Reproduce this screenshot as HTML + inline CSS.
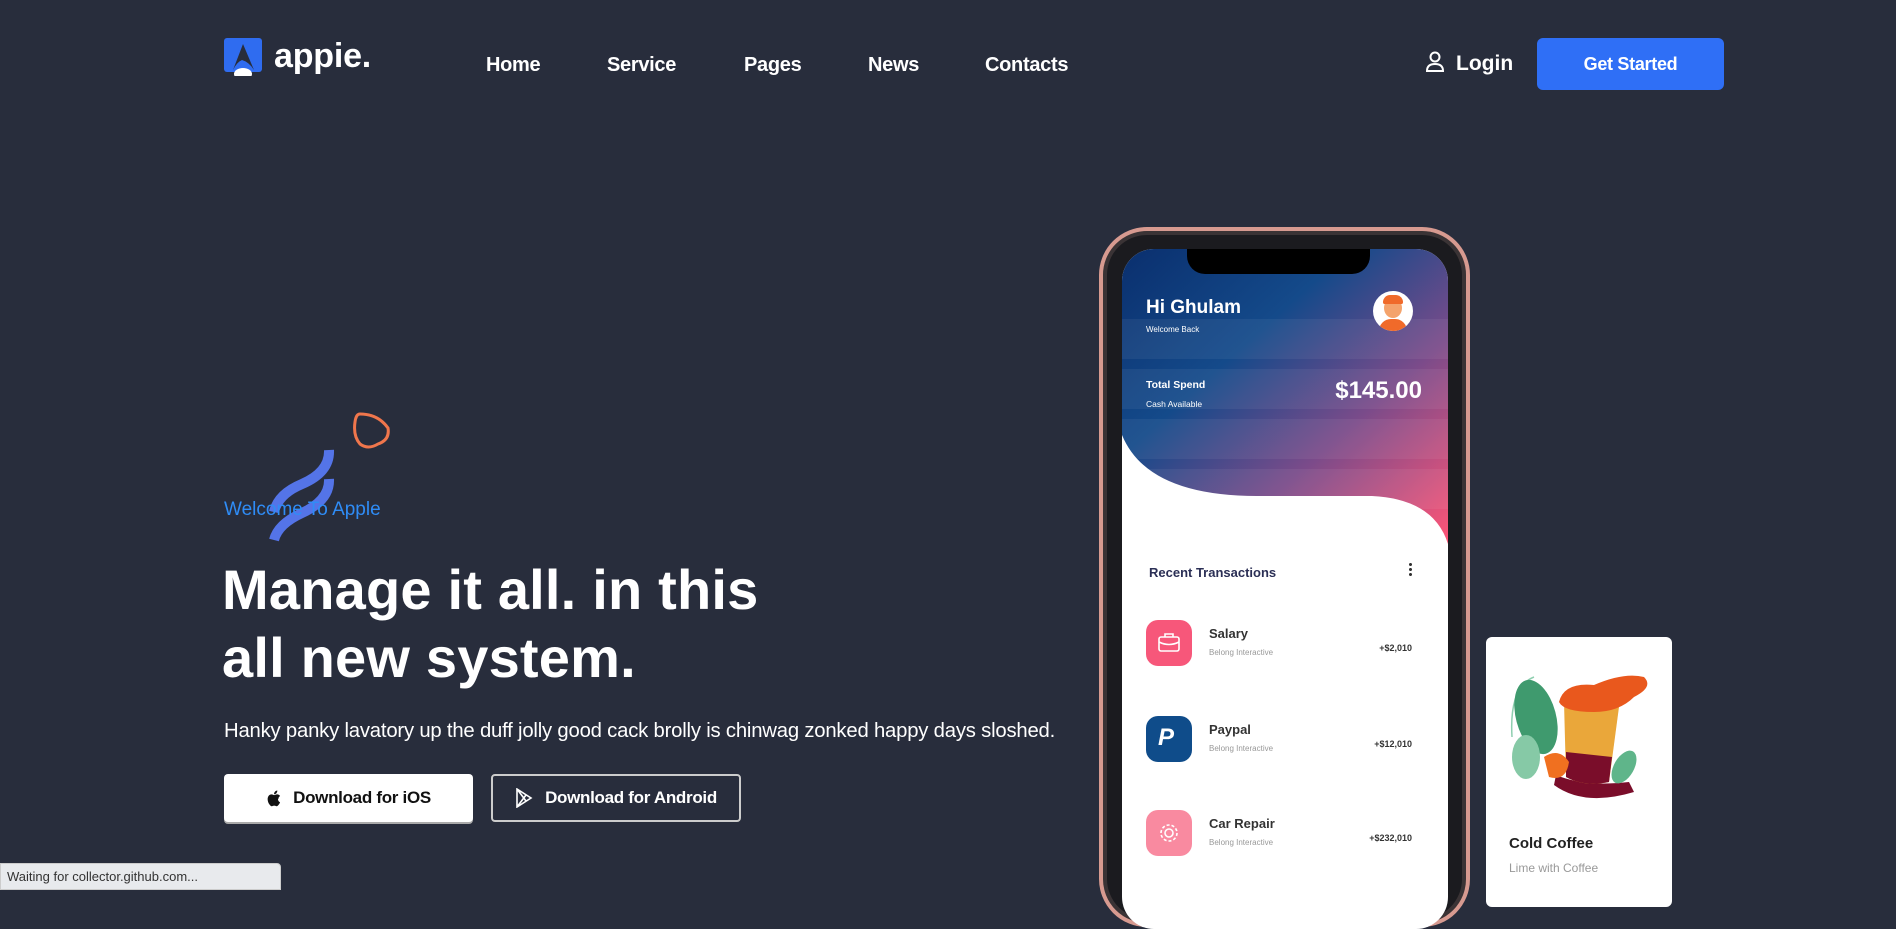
<!DOCTYPE html>
<html><head><meta charset="utf-8">
<style>
*{margin:0;padding:0;box-sizing:border-box}
html,body{width:1896px;height:890px;overflow:hidden;background:#282d3c;font-family:"Liberation Sans",Arial,sans-serif;color:#fff}
.abs{position:absolute}
.nav a{position:absolute;top:54px;font-size:20px;font-weight:bold;color:#fff;text-decoration:none;letter-spacing:-0.3px}
.btn{position:absolute;border-radius:4px;font-size:17px;font-weight:bold;display:flex;align-items:center;justify-content:center;gap:12px;letter-spacing:-0.3px}
.row{position:absolute;left:24px;width:300px;height:46px}
.ic{position:absolute;left:0;top:0;width:46px;height:46px;border-radius:12px}
.rt{position:absolute;left:63px;top:6px;font-size:13px;font-weight:bold;color:#333}
.rs{position:absolute;left:63px;top:28px;font-size:8px;color:#999}
.ra{position:absolute;right:34px;top:23px;font-size:9px;font-weight:bold;color:#333}
</style></head><body>

<svg class="abs" style="left:224px;top:38px" width="38" height="38" viewBox="0 0 38 38">
<rect x="0" y="0" width="38" height="34" rx="3" fill="#2f6cf0"/>
<path d="M9 32 L19 6 L30 32 Q25 24 18 22 Q13 24 9 32Z" fill="#282d3c"/>
<ellipse cx="19" cy="36" rx="9" ry="6" fill="#fff"/>
</svg>
<div class="abs" style="left:274px;top:37px;font-size:34px;font-weight:bold;letter-spacing:-0.2px">appie.</div>

<div class="nav">
<a style="left:486px">Home</a>
<a style="left:607px">Service</a>
<a style="left:744px">Pages</a>
<a style="left:868px">News</a>
<a style="left:985px">Contacts</a>
</div>

<svg class="abs" style="left:1425px;top:51px" width="20" height="22" viewBox="0 0 20 22" fill="none" stroke="#fff" stroke-width="2">
<circle cx="10" cy="6" r="4.5"/><path d="M2 20 Q2 13 10 13 Q18 13 18 20 Z"/>
</svg>
<div class="abs" style="left:1456px;top:52px;font-size:21px;font-weight:bold">Login</div>
<div class="btn" style="left:1537px;top:38px;width:187px;height:52px;background:#2f6ff6;border-radius:6px;font-size:18px">Get Started</div>

<svg class="abs" style="left:260px;top:400px" width="140" height="150" viewBox="0 0 140 150">
<path d="M100 14 Q118 14 128 28 Q130 40 118 44 Q108 50 100 44 Q93 36 95 22 Q96 14 100 14Z" fill="none" stroke="#f0764c" stroke-width="3"/>
<path d="M69 50 Q70 72 42 84 Q18 94 14 112" fill="none" stroke="#5474e8" stroke-width="10"/>
<path d="M69 79 Q70 100 42 113 Q18 124 14 140" fill="none" stroke="#5474e8" stroke-width="10"/>
</svg>
<div class="abs" style="left:224px;top:499px;font-size:19px;color:#2f8cf6">Welcome To Apple</div>

<div class="abs" style="left:222px;top:556px;font-size:56px;font-weight:bold;line-height:68px;letter-spacing:0.2px">Manage it all. in this<br>all new system.</div>
<div class="abs" style="left:224px;top:720px;font-size:20.3px;letter-spacing:-0.2px;white-space:nowrap">Hanky panky lavatory up the duff jolly good cack brolly is chinwag zonked happy days sloshed.</div>

<div class="btn" style="left:224px;top:774px;width:249px;height:48px;background:#fff;color:#111;box-shadow:0 2px 0 #aaa">
<svg width="15" height="17" viewBox="0 0 15 17"><path d="M12.4 9c0-2 1.6-2.9 1.7-3-1-1.4-2.4-1.6-2.9-1.6-1.2-.1-2.4.7-3 .7s-1.6-.7-2.6-.7C4.2 4.4 3 5.2 2.3 6.4.9 8.8 2 12.4 3.3 14.3c.7.9 1.4 2 2.4 1.9 1 0 1.3-.6 2.5-.6s1.5.6 2.5.6 1.7-1 2.3-1.9c.7-1 1-2 1-2.1-.1 0-2-.8-2-3.2zM10.5 3.1c.5-.7.9-1.6.8-2.6-.8 0-1.8.5-2.4 1.2-.5.6-1 1.6-.8 2.5.9.1 1.8-.4 2.4-1.1z" fill="#111"/></svg>
Download for iOS</div>
<div class="btn" style="left:491px;top:774px;width:250px;height:48px;border:2px solid #ccc">
<svg width="18" height="20" viewBox="0 0 18 20" fill="none" stroke="#fff" stroke-width="1.6"><path d="M2 1 L16 10 L2 19 Z M2 1 L11 13 M2 19 L11 7"/></svg>
Download for Android</div>

<div class="abs" style="left:1099px;top:227px;width:371px;height:700px;border-radius:48px;background:#1b1b1f;border:4px solid #d79a90;box-shadow:inset 0 0 0 4px #3a3335"></div>
<div class="abs" style="left:1122px;top:249px;width:326px;height:680px;border-radius:32px;overflow:hidden;background:#fff">
  <svg class="abs" style="left:0;top:0" width="326" height="320" viewBox="0 0 326 320">
    <defs><linearGradient id="g" x1="0" y1="0" x2="1" y2="1">
      <stop offset="0" stop-color="#0a2f6e"/><stop offset="0.35" stop-color="#144a8a"/><stop offset="0.65" stop-color="#7a4b8a"/><stop offset="1" stop-color="#ff5577"/></linearGradient></defs>
    <path d="M0 0 H326 V295 Q312 250 250 247 H135 Q25 247 0 186 Z" fill="url(#g)"/>
    <path d="M0 90 H326 M0 140 H326 M0 190 H326 M0 240 H326" stroke="#ffffff" stroke-opacity="0.06" stroke-width="40"/>
  </svg>
  <div class="abs" style="left:65px;top:0;width:183px;height:25px;background:#000;border-radius:0 0 18px 18px"></div>
  <div class="abs" style="left:24px;top:48px;font-size:19px;font-weight:bold">Hi Ghulam</div>
  <div class="abs" style="left:24px;top:76px;font-size:8px">Welcome Back</div>
  <div class="abs" style="left:251px;top:42px;width:40px;height:40px;border-radius:50%;background:#fff;overflow:hidden">
    <div class="abs" style="left:11px;top:7px;width:18px;height:20px;border-radius:50%;background:#f4a36c"></div>
    <div class="abs" style="left:10px;top:4px;width:20px;height:9px;border-radius:8px 8px 2px 2px;background:#f06a2a"></div>
    <div class="abs" style="left:6px;top:28px;width:28px;height:16px;border-radius:12px 12px 0 0;background:#f06a2a"></div>
  </div>
  <div class="abs" style="left:24px;top:130px;font-size:10.5px;font-weight:bold">Total Spend</div>
  <div class="abs" style="left:24px;top:150px;font-size:8.5px">Cash Available</div>
  <div class="abs" style="right:26px;top:128px;font-size:24px;font-weight:bold">$145.00</div>
  <div class="abs" style="left:27px;top:316px;font-size:13px;font-weight:bold;color:#2b2f55">Recent Transactions</div>
  <div class="abs" style="left:287px;top:313px;width:3px;height:14px;background:radial-gradient(circle,#333 1.4px,transparent 1.6px) 0 0/3px 5px"></div>
  <div class="row" style="top:371px"><div class="ic" style="background:#f7577a"></div>
    <svg class="abs" style="left:12px;top:13px" width="22" height="20" viewBox="0 0 22 20" fill="none" stroke="#fff" stroke-width="1.6"><rect x="1" y="4" width="20" height="14" rx="2"/><path d="M7 4V1h8v3M1 9 Q11 14 21 9"/></svg>
    <div class="rt">Salary</div><div class="rs">Belong Interactive</div><div class="ra">+$2,010</div></div>
  <div class="row" style="top:467px"><div class="ic" style="background:#0f4c8a"></div>
    <div class="abs" style="left:12px;top:8px;font-size:24px;font-style:italic;font-weight:bold;color:#fff">P</div>
    <div class="rt">Paypal</div><div class="rs">Belong Interactive</div><div class="ra">+$12,010</div></div>
  <div class="row" style="top:561px"><div class="ic" style="background:#f98aa0"></div>
    <svg class="abs" style="left:11px;top:11px" width="24" height="24" viewBox="0 0 24 24" fill="none" stroke="#fff" stroke-width="1.6"><circle cx="12" cy="12" r="8" stroke-dasharray="3 2"/><circle cx="12" cy="12" r="4"/></svg>
    <div class="rt">Car Repair</div><div class="rs">Belong Interactive</div><div class="ra">+$232,010</div></div>
</div>

<div class="abs" style="left:1486px;top:637px;width:186px;height:270px;background:#fff;border-radius:6px">
  <svg class="abs" style="left:18px;top:20px" width="155" height="152" viewBox="0 0 155 152">
    <path d="M30 20 Q5 30 8 80" fill="none" stroke="#8fcfb0" stroke-width="1.5"/>
    <ellipse cx="32" cy="60" rx="20" ry="38" fill="#3f9a6e" transform="rotate(-15 32 60)"/>
    <ellipse cx="22" cy="100" rx="14" ry="22" fill="#86c9a6"/>
    <path d="M50 128 Q80 150 130 135 L125 125 Q80 130 52 118Z" fill="#7a0d2a"/>
    <path d="M60 45 L115 50 L105 125 Q80 130 62 120 Z" fill="#eaa73a"/>
    <path d="M62 95 L108 100 L105 125 Q80 130 62 120Z" fill="#7a0d2a"/>
    <path d="M55 45 Q60 25 90 28 Q120 15 140 20 Q150 30 130 40 Q115 55 90 55 Q60 55 55 45Z" fill="#e9581d"/>
    <path d="M40 100 Q55 90 65 105 Q62 125 45 120Z" fill="#f07020"/>
    <ellipse cx="120" cy="110" rx="10" ry="18" fill="#5fb58a" transform="rotate(30 120 110)"/>
  </svg>
  <div class="abs" style="left:23px;top:198px;font-size:15px;font-weight:bold;color:#222">Cold Coffee</div>
  <div class="abs" style="left:23px;top:224px;font-size:12px;color:#999">Lime with Coffee</div>
</div>

<div class="abs" style="left:0;top:863px;width:281px;height:27px;background:#e8eaed;border-radius:0 4px 0 0;border:1px solid #ccc;color:#333;font-size:13px;padding:5px 6px">Waiting for collector.github.com...</div>
</body></html>
